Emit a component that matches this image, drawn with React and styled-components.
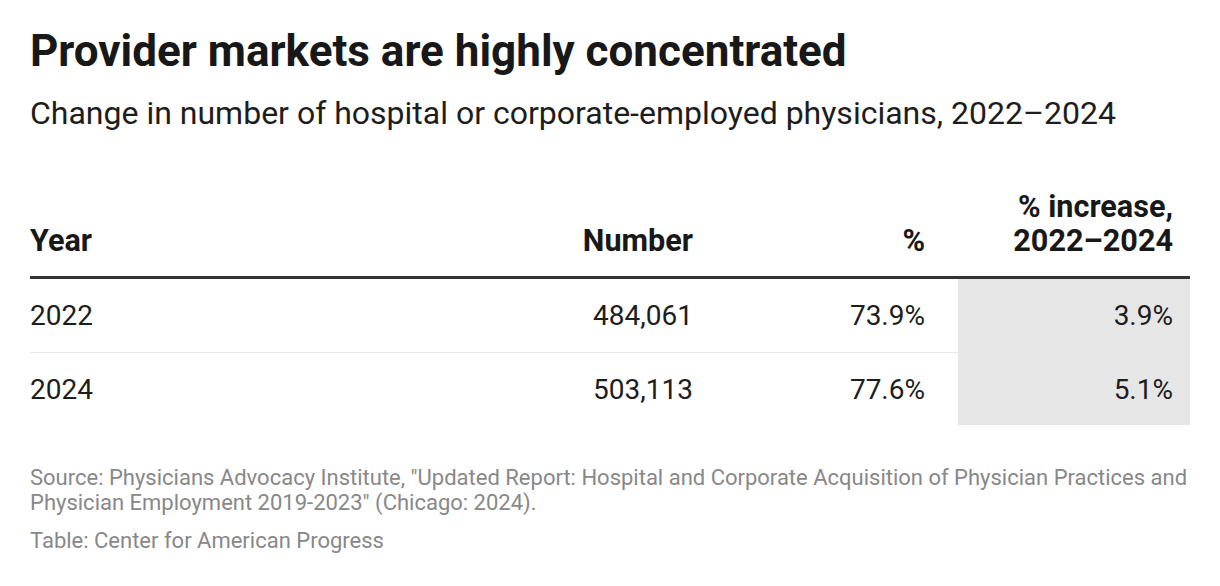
import styled, { createGlobalStyle } from 'styled-components';

const GlobalStyle = createGlobalStyle`
  html, body {
    margin: 0;
    padding: 0;
    background: #ffffff;
  }
  body {
    font-family: Roboto, "Liberation Sans", sans-serif;
    color: #181818;
  }
`;

const Page = styled.div`
  display: flex;
  flex-direction: column;
  width: 1160px;
  padding: 25px 30px 0 30px;
`;

const Title = styled.h1`
  margin: 0;
  font-size: 44px;
  font-weight: 700;
  line-height: 52px;
  color: #181818;
`;

const Subtitle = styled.p`
  margin: 16px 0 0;
  font-size: 32px;
  font-weight: 400;
  line-height: 40px;
  color: #1d1d1d;
`;

const Table = styled.div`
  display: grid;
  grid-template-columns: 440px 240px 248px 232px;
  margin-top: 57px;
`;

const HeadCell = styled.div`
  display: flex;
  align-items: flex-end;
  justify-content: ${({ align }) => (align === 'right' ? 'flex-end' : 'flex-start')};
  text-align: ${({ align }) => align || 'left'};
  padding: 0 ${({ pr }) => pr || 0}px 18px 0;
  border-bottom: 3px solid #333333;
  font-size: 30.6px;
  font-weight: 700;
  line-height: 34px;
  color: #181818;
`;

const Cell = styled.div`
  display: flex;
  align-items: center;
  justify-content: ${({ align }) => (align === 'right' ? 'flex-end' : 'flex-start')};
  height: ${({ last }) => (last ? 72 : 73)}px;
  padding-right: ${({ pr }) => pr || 0}px;
  border-bottom: ${({ last }) => (last ? 'none' : '1px solid #e8e8e8')};
  background: ${({ shaded }) => (shaded ? '#e6e6e6' : 'transparent')};
  font-size: 28px;
  font-weight: 400;
  color: #1d1d1d;
`;

const Notes = styled.div`
  margin-top: 40px;
  font-size: 22px;
  line-height: 25px;
  color: #888888;
`;

const Byline = styled.div`
  margin-top: 13px;
  font-size: 22px;
  line-height: 25px;
  color: #888888;
`;

const rows = [
  { year: '2022', number: '484,061', pct: '73.9%', inc: '3.9%' },
  { year: '2024', number: '503,113', pct: '77.6%', inc: '5.1%' },
];

export default function App() {
  return (
    <>
      <GlobalStyle />
      <Page>
        <Title>Provider markets are highly concentrated</Title>
        <Subtitle>Change in number of hospital or corporate-employed physicians, 2022–2024</Subtitle>
        <Table>
          <HeadCell>Year</HeadCell>
          <HeadCell align="right" pr={17}>Number</HeadCell>
          <HeadCell align="right" pr={33}>%</HeadCell>
          <HeadCell align="right" pr={17}>
            % increase,
            <br />
            2022–2024
          </HeadCell>
          {rows.map((r, i) => {
            const last = i === rows.length - 1;
            return [
              <Cell key={`y${i}`} last={last}>{r.year}</Cell>,
              <Cell key={`n${i}`} last={last} align="right" pr={17}>{r.number}</Cell>,
              <Cell key={`p${i}`} last={last} align="right" pr={33}>{r.pct}</Cell>,
              <Cell key={`i${i}`} last={last} align="right" pr={17} shaded>{r.inc}</Cell>,
            ];
          })}
        </Table>
        <Notes>
          Source: Physicians Advocacy Institute, "Updated Report: Hospital and Corporate Acquisition of Physician Practices and Physician Employment 2019-2023" (Chicago: 2024).
        </Notes>
        <Byline>Table: Center for American Progress</Byline>
      </Page>
    </>
  );
}
